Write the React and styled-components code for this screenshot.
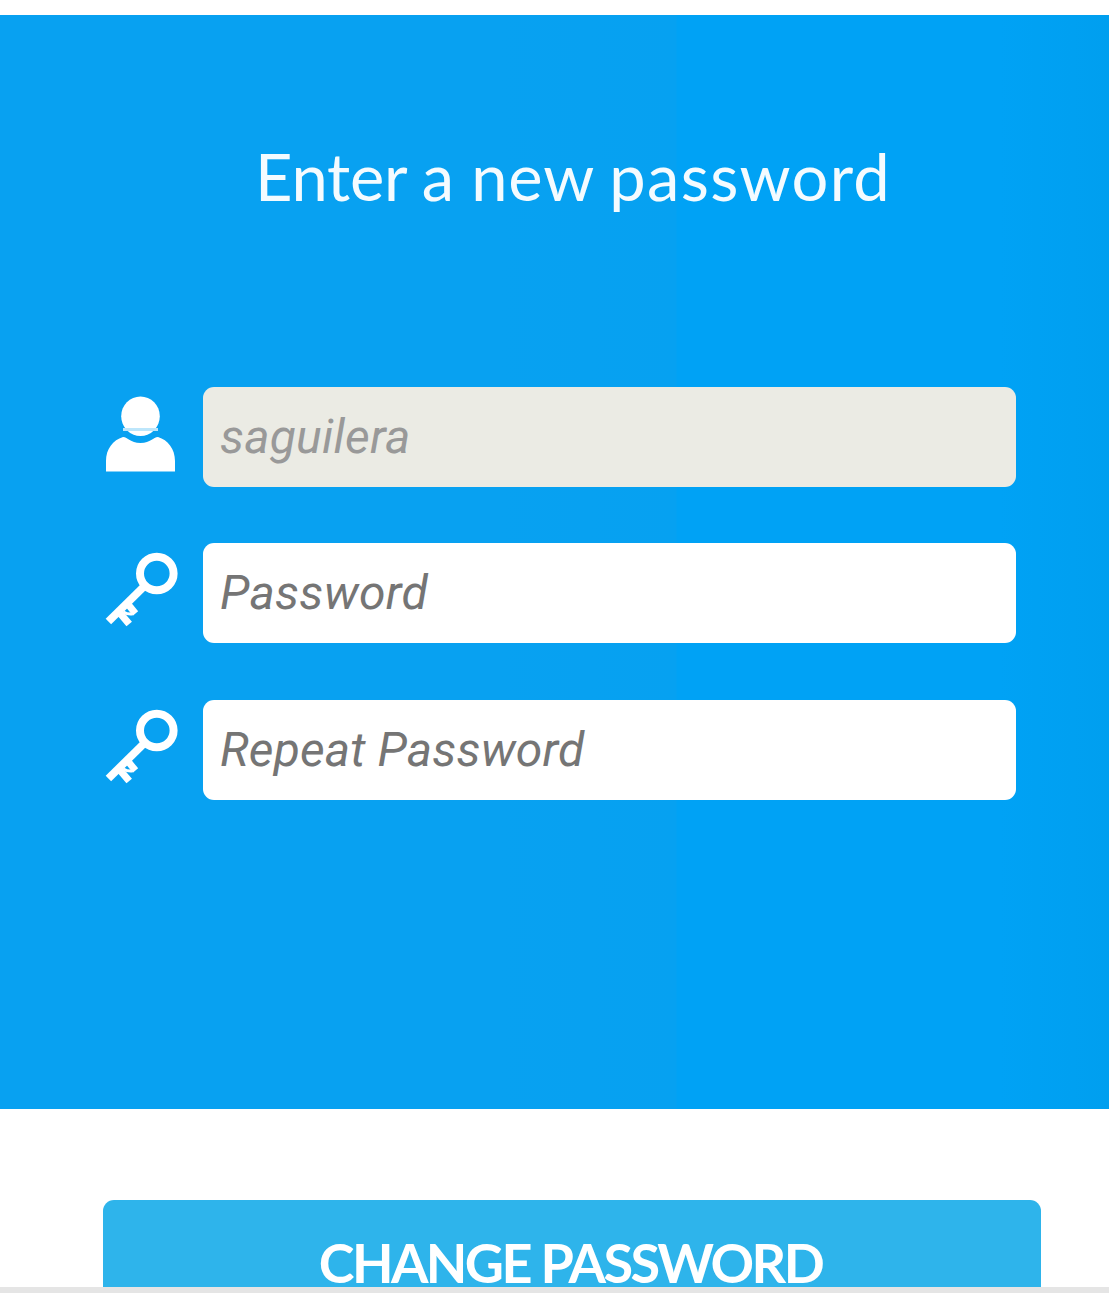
import React from "react";
import styled, { createGlobalStyle } from "styled-components";

const GlobalStyle = createGlobalStyle`
  *, *::before, *::after { box-sizing: border-box; }
  body { margin: 0; background: #fff; }
`;

const Page = styled.div`
  display: flex;
  flex-direction: column;
  width: 1109px;
  height: 1293px;
  padding-top: 15px;
  overflow: hidden;
  background: #fff;
`;

const Panel = styled.main`
  display: flex;
  flex-direction: column;
  flex: none;
  height: 1094px;
  padding: 121px 93px 0 105px;
  background: linear-gradient(90deg, #08a1f1 0, #08a1f1 500px, #06a1f1 676px, #00a2f5 677px, #00a2f5 1000px, #009fef 100%);
`;

const Title = styled.h1`
  margin: 0 0 171.4px;
  padding-left: 150px;
  height: 80px;
  font: 400 65px/80px Lato, "Open Sans", sans-serif;
  word-spacing: -2.5px;
  white-space: nowrap;
  color: #f4fbff;
`;

const Word = styled.span`
  letter-spacing: ${(p) => p.$tracking}px;
`;

const Form = styled.form`
  display: flex;
  flex-direction: column;
  gap: 56.1px;
`;

const Row = styled.label`
  display: grid;
  grid-template-columns: 98px 813px;
  height: 100px;
`;

const Icon = styled.svg`
  display: block;
  width: 76px;
  height: 100px;
  color: #fff;
`;

const Input = styled.input`
  width: 100%;
  height: 100px;
  margin: 0;
  padding: 0 17px 1px;
  border: 0;
  border-radius: 11px;
  outline: 0;
  background: ${(p) => (p.disabled ? "#ebebe4" : "#fff")};
  color: #999;
  font: italic 400 48px Roboto, sans-serif;
  letter-spacing: ${(p) => p.$tracking}px;
  &::placeholder { color: #757575; opacity: 1; }
`;

const Actions = styled.footer`
  display: flex;
  flex: none;
  height: 178px;
  padding: 91px 68px 0 103px;
  overflow: hidden;
`;

const Button = styled.button`
  flex: 1;
  height: 130px;
  margin: 0;
  padding: 0 3px 4px 0;
  border: 0;
  border-radius: 11px;
  background: #2eb4eb;
  color: #fff;
  font: 700 54px/44px Lato, "Open Sans", sans-serif;
  letter-spacing: ${(p) => p.$tracking}px;
  white-space: nowrap;
`;

const BottomEdge = styled.div`
  flex: none;
  height: 6px;
  background: #e5e5e5;
`;

function UserIcon() {
  return (
    <Icon viewBox="0 0 76 100" fill="currentColor" aria-hidden="true">
      <ellipse cx="35.5" cy="29.2" rx="19.3" ry="19.8" />
      <path d="M1 84.5V74C1 62 8 53 18 50C23 50 25 56 35.5 56C46 56 48 50 53 50C63 53 70 62 70 74V84.5Z" />
      <path d="M18 42.4H53" stroke="#bde6fb" strokeWidth="3" />
    </Icon>
  );
}

function KeyIcon() {
  return (
    <Icon viewBox="0 0 76 100" fill="none" stroke="currentColor" strokeLinejoin="round" aria-hidden="true">
      <circle cx="51.8" cy="30.5" r="16.8" strokeWidth="8" />
      <path d="M40 42.5L3.4 78.5" strokeWidth="7.8" />
      <path d="M14 69L24.2 81" strokeWidth="7.2" />
      <path d="M22 60L30.5 70.5" strokeWidth="6.8" />
      <path d="M18.5 69Q22.5 71.5 27 71" strokeWidth="3" />
    </Icon>
  );
}

export default function App() {
  return (
    <>
      <GlobalStyle />
      <Page>
        <Panel>
          <Title>
            <Word $tracking={-0.2}>Enter</Word> <Word $tracking={3}>a</Word>{" "}
            <Word $tracking={0.9}>new</Word> <Word $tracking={1.3}>password</Word>
          </Title>
          <Form>
            <Row>
              <UserIcon />
              <Input $tracking={0.2} defaultValue="saguilera" disabled aria-label="Username" />
            </Row>
            <Row>
              <KeyIcon />
              <Input $tracking={0.3} type="password" placeholder="Password" />
            </Row>
            <Row>
              <KeyIcon />
              <Input $tracking={0.15} type="password" placeholder="Repeat Password" />
            </Row>
          </Form>
        </Panel>
        <Actions>
          <Button $tracking={-2.6}>CHANGE PASSWORD</Button>
        </Actions>
        <BottomEdge />
      </Page>
    </>
  );
}
